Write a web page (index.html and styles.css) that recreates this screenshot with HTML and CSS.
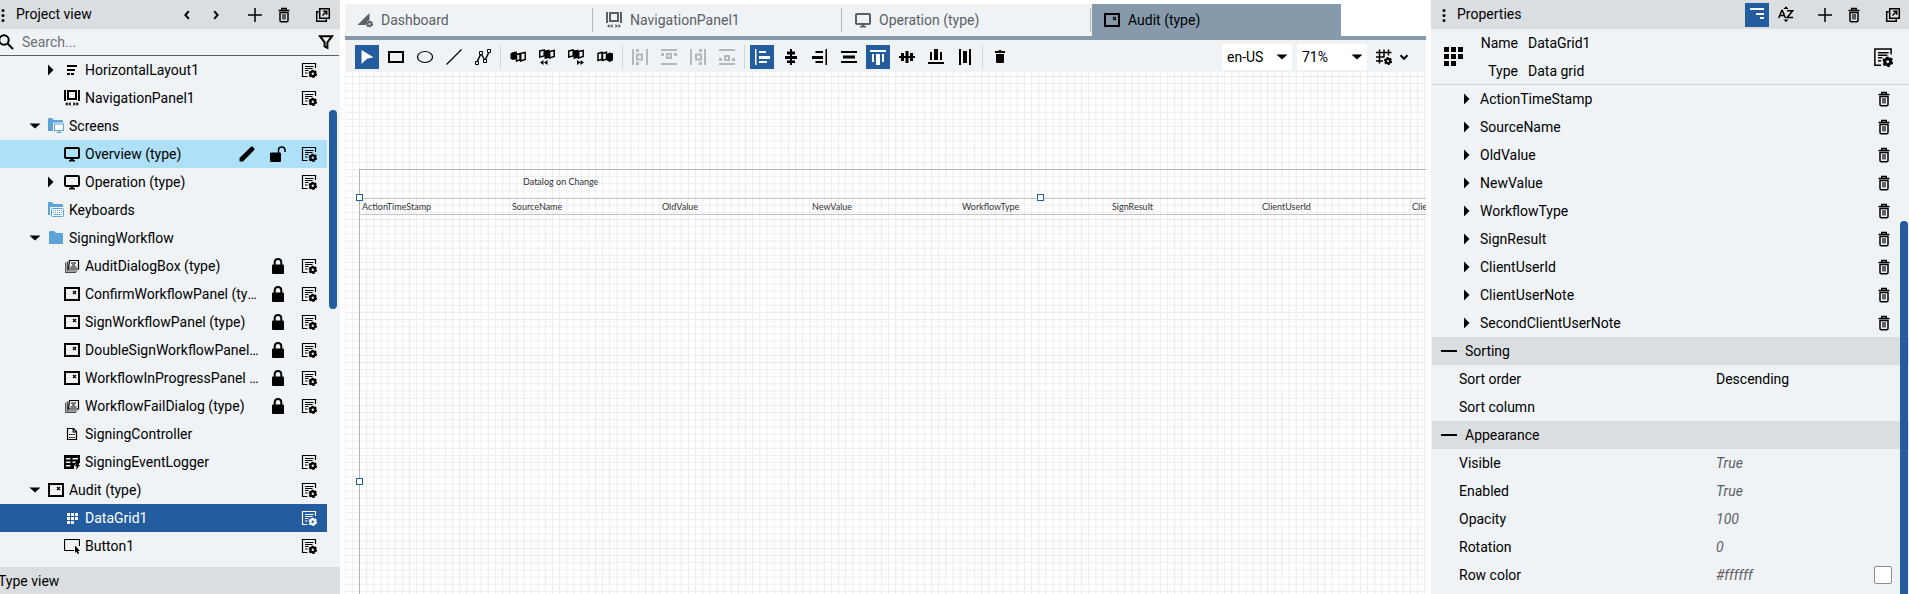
FILE: index.html
```html
<!DOCTYPE html>
<html lang="en">
<head>
<meta charset="utf-8">
<title>Project editor</title>
<link rel="stylesheet" href="styles.css">
</head>
<body>
<svg class="sprite" aria-hidden="true">
  <symbol id="dots" viewBox="0 0 16 16"><circle cx="8" cy="3.500" r="1.500"/><circle cx="8" cy="8.500" r="1.500"/><circle cx="8" cy="13.500" r="1.500"/></symbol>
  <symbol id="prev" viewBox="0 0 16 16"><path d="M9.800 4.200 6.400 8l3.400 3.800" class="ln2"/></symbol>
  <symbol id="next" viewBox="0 0 16 16"><path d="M6.200 4.200 9.600 8l-3.400 3.800" class="ln2"/></symbol>
  <symbol id="down" viewBox="0 0 16 16"><path d="M4.500 6.200 8 9.800l3.500-3.600" class="ln2"/></symbol>
  <symbol id="plus" viewBox="0 0 16 16"><path d="M8 1v14M1 8h14" class="ln15"/></symbol>
  <symbol id="trash" viewBox="0 0 16 16"><path d="M2.500 3.500h11M5.800 3.200V1.500h4.400v1.700M4 5.500v8q0 1.200 1.200 1.200h5.600q1.200 0 1.200-1.200v-8z" class="ln15"/><path d="M7 7v5.500M9 7v5.500" class="ln1"/></symbol>
  <symbol id="popout" viewBox="0 0 16 16"><path d="M4.700 1.700h9.600v9.600H4.700zM3.800 4.700H1.700v9.600h9.600v-2" class="ln15"/><path d="M7.500 8.500l4-4M8.300 4.300h3.400v3.400" class="ln15"/></symbol>
  <symbol id="search" viewBox="0 0 16 16"><circle cx="6" cy="6" r="4.700" class="ln2"/><path d="M9.500 9.500l5.500 5.500" class="ln2"/></symbol>
  <symbol id="filter" viewBox="0 0 16 16"><path d="M2 2.200h12L9.400 8.300v5.600L6.600 12.500V8.300z" class="ln2"/></symbol>
  <symbol id="caret-r" viewBox="0 0 16 16"><path d="M5 2.500 10.500 8 5 13.500z"/></symbol>
  <symbol id="caret-d" viewBox="0 0 16 16"><path d="M2.500 5.500h11L8 10.500z"/></symbol>
  <symbol id="gear" viewBox="0 0 8 8"><circle cx="4" cy="4" r="2.200" fill="none" stroke="currentColor" stroke-width="2.200"/><circle cx="4" cy="4" r="3.400" fill="none" stroke="currentColor" stroke-width="1.400" stroke-dasharray="2 1.560"/></symbol>
  <symbol id="props" viewBox="0 0 16 16"><path d="M6.500 14.500h-5v-13h13V6M4 4.500h8.500M4 6.500h7.500M4 8.500h3.500M4 11h2.500" class="ln1"/><use href="#gear" x="7.500" y="7.500" width="8.500" height="8.500"/></symbol>
  <symbol id="layout" viewBox="0 0 16 16"><path d="M3 3h10v2H3zM3 7h8v2H3zM3 11h3v2H3zM7 11h3v2H7z"/></symbol>
  <symbol id="nav" viewBox="0 0 16 16"><path d="M0 0h2v11H0zM14 0h2v11h-2z"/><path d="M4 1h8v8H4z" class="ln2"/><path d="M1 14l2.600-2v4zM4 14l2.600-2v4zM15 14l-2.600-2v4zM12 14l-2.600-2v4z"/></symbol>
  <symbol id="screen" viewBox="0 0 16 16"><rect x="1" y="2" width="14" height="10" rx="1" class="ln2"/><path d="M6.500 12h3v2h1.500v1.500H5V14h1.500z"/></symbol>
  <symbol id="folder" viewBox="0 0 16 16"><path d="M1 2q0-1 1-1h4l2 2h6q1 0 1 1v9q0 1-1 1H2q-1 0-1-1z" fill="#5ba4d9"/></symbol>
  <symbol id="folder-screen" viewBox="0 0 16 16"><path d="M0 1q0-1 1-1h3l1.500 2H14q1 0 1 1v10H0z" fill="#5ba4d9"/><path d="M5 4.500h11V16H5z" fill="#eff3f6"/><rect x="6.500" y="6" width="9" height="6.500" fill="#fff" stroke="#5ba4d9"/><path d="M8.500 14.500h5M11 13v2" stroke="#5ba4d9" stroke-width="1.200"/></symbol>
  <symbol id="folder-keys" viewBox="0 0 16 16"><path d="M0 1q0-1 1-1h3l1.500 2H14q1 0 1 1v10H0z" fill="#5ba4d9"/><rect x="2" y="5" width="14" height="11" fill="#eff3f6"/><rect x="3.500" y="6.500" width="12" height="8" rx="1" fill="#fff" stroke="#5ba4d9"/><path d="M5 8.500h9M5 10.500h9" stroke="#5ba4d9" stroke-dasharray="1 1"/><path d="M6 12.500h7" stroke="#5ba4d9"/></symbol>
  <symbol id="dialog" viewBox="0 0 16 16"><path d="M5.500 2.500h9v8.500h-10z" class="ln1"/><path d="M3.500 3.500v9.500h10M1.700 4.500v10H12" class="ln1" opacity=".7"/><path d="M7 5h5M8 7h3M6.500 9h6" class="ln1"/></symbol>
  <symbol id="panel" viewBox="0 0 16 16"><path d="M1 2h14v12H1z" class="ln2"/><path d="M9 5l3 3M12 5L9 8" class="ln1"/></symbol>
  <symbol id="script" viewBox="0 0 16 16"><path d="M3.500 2.500h6l3 3v8h-9zM9.200 2.500v3.500h3.500" class="ln1"/><path d="M5 8.500h6M5 11.500h6" class="ln1" stroke-dasharray="1.500 .700"/></symbol>
  <symbol id="logger" viewBox="0 0 16 16"><path fill-rule="evenodd" d="M0 1h16v8h-3.500L10 12v3H0zM2 4v1.500h4.500V4zM8.500 4v1.500H14V4zM2 7.500V9h4.500V7.500zM8.500 7.500V9H11l1-1.500zM2 11v1.500h4.500V11z"/><path d="M12.500 8.500h3l-1 2.500H16l-4 5 .800-3.500H11z"/></symbol>
  <symbol id="grid" viewBox="0 0 16 16"><path d="M3 3h3v3H3zM7 3h3v3H7zM11 3h3v3h-3zM3 7h3v3H3zM7 7h3v3H7zM11 7h3v3h-3zM3 11h3v3H3zM7 11h3v3H7z"/></symbol>
  <symbol id="grid-big" viewBox="0 0 19 19"><path d="M0 0h5v5H0zM7 0h5v5H7zM14 0h5v5h-5zM0 7h5v5H0zM7 7h5v5H7zM14 7h5v5h-5zM0 14h5v5H0zM7 14h5v5H7z"/></symbol>
  <symbol id="button" viewBox="0 0 16 16"><path d="M10 12.500H.500V1.500h15V8" class="ln1"/><path d="M11 7.500l5 5.500h-2l1.200 2.500-1.500.500-1.200-2.500L11 15z"/></symbol>
  <symbol id="pencil" viewBox="0 0 16 16"><path d="M.500 15.500V12L12 .800q.800-.800 1.700 0l1.500 1.500q.800.900 0 1.700L4 15.500z"/></symbol>
  <symbol id="unlock" viewBox="0 0 16 16"><rect x="0" y="6.500" width="11" height="9.500" rx="1"/><path d="M8.500 7V4q0-3 3.200-3T15 4v2" class="ln15"/></symbol>
  <symbol id="lock" viewBox="0 0 16 16"><rect x="2" y="6.500" width="12" height="9.500" rx="1"/><path d="M4.700 7V4.600q0-3.600 3.300-3.600t3.300 3.600V7" class="ln2"/></symbol>
  <symbol id="dash" viewBox="0 0 16 16"><path d="M12.500 1v7.500Q9.500 8.500 9 13H.500z"/><use href="#gear" x="9" y="8.500" width="7" height="7"/></symbol>
  <symbol id="pointer" viewBox="0 0 16 16"><path d="M2.500 1l12 7.200-6.500 1.500L2.500 15z"/></symbol>
  <symbol id="rect" viewBox="0 0 16 16"><path d="M1 3h14v10H1z" class="ln2"/></symbol>
  <symbol id="ellipse" viewBox="0 0 16 16"><ellipse cx="8" cy="8" rx="7.500" ry="5.500" class="ln1"/></symbol>
  <symbol id="line" viewBox="0 0 16 16"><path d="M.500 15.500L15.500.500" class="ln1"/></symbol>
  <symbol id="poly" viewBox="0 0 16 16"><path d="M2 13L6 4.500l4 7L14 3" class="ln15"/><path d="M.500 12.500h3v3h-3zM4.500 2.500h3v3h-3zM8.500 10.500h3v3h-3zM12.500.500h3v3h-3z" fill="#eff3f6" stroke="currentColor"/></symbol>
  <symbol id="front" viewBox="0 0 16 16"><path d="M.500 4.500l2.500-1.500 4-.500v7.500l-4 1-2.500-1z"/><path d="M6.500 5.500l3.500-1v6.500l-3.500 1zM10.700 4.500l4.500-1v7l-4.500 1.500z" class="ln15"/></symbol>
  <symbol id="forward" viewBox="0 0 16 16"><path d="M.700 2l4.500-1v6l-4.500 1zM10.700 2.500l4.500-1v6l-4.500 1.500z" class="ln15"/><path d="M5.500 1.500l5-1v8.500l-5 1zM1 13.500l3.500-2.500v5zM5 13.500l3.500-2.500v5z"/></symbol>
  <symbol id="backward" viewBox="0 0 16 16"><path d="M.700 2l4.500-1v6l-4.500 1zM10.700 2.500l4.500-1v6l-4.500 1.500z" class="ln15"/><path d="M5.500 1.500l5-1v8.500l-5 1zM12.500 13.500L9 11v5zM16 13.500L12.500 11v5z"/></symbol>
  <symbol id="back" viewBox="0 0 16 16"><path d="M1 4.500l4-1.200v7l-4 1.200zM5.500 4.500l4-1.200v7l-4 1.200z" class="ln15"/><path d="M10 5l3-1.500 3 1v7l-3.500 1.500-2.500-1.500z"/></symbol>
  <symbol id="dist-l" viewBox="0 0 16 16"><path d="M0 0h2v16H0zM14 0h2v16h-2zM4 0h3v3H4zM4 13h3v3H4z"/><path d="M5 5.500h5v5H5z" class="ln2"/></symbol>
  <symbol id="dist-t" viewBox="0 0 16 16"><path d="M0 0h16v2H0zM0 14h16v2H0zM0 4h3v3H0zM13 4h3v3h-3z"/><path d="M6 5h4v4H6z" class="ln2"/></symbol>
  <symbol id="dist-r" viewBox="0 0 16 16"><path d="M0 0h2v16H0zM14 0h2v16h-2zM9 0h3v3H9zM9 13h3v3H9z"/><path d="M6 5.500h5v5H6z" class="ln2"/></symbol>
  <symbol id="dist-b" viewBox="0 0 16 16"><path d="M0 0h16v2H0zM0 14h16v2H0zM0 9h3v3H0zM13 9h3v3h-3z"/><path d="M6 7h4v4H6z" class="ln2"/></symbol>
  <symbol id="al-l" viewBox="0 0 16 16"><path d="M1 0h1.500v16H1zM5 2h7v2H5zM5 7h11v3H5zM5 12h8v2H5z"/></symbol>
  <symbol id="al-c" viewBox="0 0 16 16"><path d="M7 0h2v16H7zM4 2.500h8v3H4zM2 7h12v3H2zM4 11.500h8v2.500H4z"/></symbol>
  <symbol id="al-r" viewBox="0 0 16 16"><path d="M13.500 0H15v16h-1.500zM3.500 2H11v2H3.500zM0 7h11v3H0zM3.500 12H11v2H3.500z"/></symbol>
  <symbol id="al-w" viewBox="0 0 16 16"><path d="M0 2h16v2H0zM2 6.500h12v3H2zM0 12h16v2H0z"/></symbol>
  <symbol id="al-t" viewBox="0 0 16 16"><path d="M0 1h16v2H0zM2 5h2v8H2zM6 5h4v11H6zM12 5h2v8h-2z"/></symbol>
  <symbol id="al-m" viewBox="0 0 16 16"><path d="M0 7h16v2H0zM2 4h3v8H2zM6.500 2h3v12h-3zM11 4h3v8h-3z"/></symbol>
  <symbol id="al-b" viewBox="0 0 16 16"><path d="M0 13h16v2H0zM2 3h2v8H2zM6 0h4v11H6zM12 3h2v8h-2z"/></symbol>
  <symbol id="al-h" viewBox="0 0 16 16"><path d="M2 0h2v16H2zM12 0h2v16h-2zM6 2h4v12H6z"/></symbol>
  <symbol id="bin" viewBox="0 0 16 16"><path d="M3 2h3.500L7 1h2l.500 1H13v2H3zM4 5h8v8q0 1-1 1H5q-1 0-1-1z"/></symbol>
  <symbol id="gridset" viewBox="0 0 16 16"><path d="M3.500.500v14M8 .500v8M12.500.500v6M0 3.500h15.500M0 8h8M0 12h7" class="ln15"/><use href="#gear" x="8" y="8" width="8" height="8"/></symbol>
  <symbol id="category" viewBox="0 0 16 16"><path d="M1 1h14v2H1zM7 6h8v2H7zM11 10h4v2h-4z"/></symbol>
  <symbol id="az" viewBox="0 0 16 16"><path d="M.700 12L3.800 4.500h.600L7.500 12M1.800 9.500h4.600M9 4.800h5.600L9.200 11.500h5.900" class="ln15"/><path d="M5.500 3L8 .300 10.500 3zM5.500 13.500L8 16l2.500-2.500z"/></symbol>
</svg>

<div class="app">
  <aside class="panel project">
    <header class="panel-head">
      <svg class="grip grip-edge"><use href="#dots"/></svg>
      <h2>Project view</h2>
      <div class="group">
        <button class="tool" aria-label="Previous"><svg><use href="#prev"/></svg></button>
        <button class="tool" aria-label="Next"><svg><use href="#next"/></svg></button>
      </div>
      <div class="group">
        <button class="tool" aria-label="Add"><svg><use href="#plus"/></svg></button>
        <button class="tool" aria-label="Delete"><svg><use href="#trash"/></svg></button>
      </div>
      <button class="tool" aria-label="Pop out"><svg><use href="#popout"/></svg></button>
    </header>
    <div class="search">
      <svg class="search-icon"><use href="#search"/></svg>
      <input type="text" placeholder="Search..." aria-label="Search">
      <button class="bare" aria-label="Filter"><svg><use href="#filter"/></svg></button>
    </div>
    <div class="tree-area">
      <ul class="tree">
        <li class="row deep"><svg class="caret"><use href="#caret-r"/></svg><svg><use href="#layout"/></svg><span class="label">HorizontalLayout1</span><button class="bare" aria-label="Settings"><svg><use href="#props"/></svg></button></li>
        <li class="row deep"><span class="caret"></span><svg><use href="#nav"/></svg><span class="label">NavigationPanel1</span><button class="bare" aria-label="Settings"><svg><use href="#props"/></svg></button></li>
        <li class="row"><svg class="caret"><use href="#caret-d"/></svg><svg><use href="#folder-screen"/></svg><span class="label">Screens</span></li>
        <li class="row deep hover"><span class="caret"></span><svg><use href="#screen"/></svg><span class="label">Overview (type)</span><button class="bare" aria-label="Edit"><svg><use href="#pencil"/></svg></button><button class="bare" aria-label="Lock"><svg><use href="#unlock"/></svg></button><button class="bare" aria-label="Settings"><svg><use href="#props"/></svg></button></li>
        <li class="row deep"><svg class="caret"><use href="#caret-r"/></svg><svg><use href="#screen"/></svg><span class="label">Operation (type)</span><button class="bare" aria-label="Settings"><svg><use href="#props"/></svg></button></li>
        <li class="row"><span class="caret"></span><svg><use href="#folder-keys"/></svg><span class="label">Keyboards</span></li>
        <li class="row"><svg class="caret"><use href="#caret-d"/></svg><svg><use href="#folder"/></svg><span class="label">SigningWorkflow</span></li>
        <li class="row deep"><span class="caret"></span><svg><use href="#dialog"/></svg><span class="label">AuditDialogBox (type)</span><button class="bare" aria-label="Unlock"><svg><use href="#lock"/></svg></button><button class="bare" aria-label="Settings"><svg><use href="#props"/></svg></button></li>
        <li class="row deep"><span class="caret"></span><svg><use href="#panel"/></svg><span class="label">ConfirmWorkflowPanel (type)</span><button class="bare" aria-label="Unlock"><svg><use href="#lock"/></svg></button><button class="bare" aria-label="Settings"><svg><use href="#props"/></svg></button></li>
        <li class="row deep"><span class="caret"></span><svg><use href="#panel"/></svg><span class="label">SignWorkflowPanel (type)</span><button class="bare" aria-label="Unlock"><svg><use href="#lock"/></svg></button><button class="bare" aria-label="Settings"><svg><use href="#props"/></svg></button></li>
        <li class="row deep"><span class="caret"></span><svg><use href="#panel"/></svg><span class="label">DoubleSignWorkflowPanel (type)</span><button class="bare" aria-label="Unlock"><svg><use href="#lock"/></svg></button><button class="bare" aria-label="Settings"><svg><use href="#props"/></svg></button></li>
        <li class="row deep"><span class="caret"></span><svg><use href="#panel"/></svg><span class="label">WorkflowInProgressPanel (type)</span><button class="bare" aria-label="Unlock"><svg><use href="#lock"/></svg></button><button class="bare" aria-label="Settings"><svg><use href="#props"/></svg></button></li>
        <li class="row deep"><span class="caret"></span><svg><use href="#dialog"/></svg><span class="label">WorkflowFailDialog (type)</span><button class="bare" aria-label="Unlock"><svg><use href="#lock"/></svg></button><button class="bare" aria-label="Settings"><svg><use href="#props"/></svg></button></li>
        <li class="row deep"><span class="caret"></span><svg><use href="#script"/></svg><span class="label">SigningController</span></li>
        <li class="row deep"><span class="caret"></span><svg><use href="#logger"/></svg><span class="label">SigningEventLogger</span><button class="bare" aria-label="Settings"><svg><use href="#props"/></svg></button></li>
        <li class="row"><svg class="caret"><use href="#caret-d"/></svg><svg><use href="#panel"/></svg><span class="label">Audit (type)</span><button class="bare" aria-label="Settings"><svg><use href="#props"/></svg></button></li>
        <li class="row deep selected"><span class="caret"></span><svg><use href="#grid"/></svg><span class="label">DataGrid1</span><button class="bare" aria-label="Settings"><svg><use href="#props"/></svg></button></li>
        <li class="row deep"><span class="caret"></span><svg><use href="#button"/></svg><span class="label">Button1</span><button class="bare" aria-label="Settings"><svg><use href="#props"/></svg></button></li>
      </ul>
      <div class="scroll-thumb tree-thumb"></div>
    </div>
    <footer class="type-view">Type view</footer>
  </aside>

  <main class="editor">
    <nav class="tabs">
      <button class="tab"><svg><use href="#dash"/></svg><span>Dashboard</span></button>
      <button class="tab"><svg><use href="#nav"/></svg><span>NavigationPanel1</span></button>
      <button class="tab"><svg><use href="#screen"/></svg><span>Operation (type)</span></button>
      <button class="tab active"><svg><use href="#panel"/></svg><span>Audit (type)</span></button>
    </nav>
    <div class="toolbar">
      <button class="tool on" aria-label="Select"><svg><use href="#pointer"/></svg></button>
      <button class="tool" aria-label="Rectangle"><svg><use href="#rect"/></svg></button>
      <button class="tool" aria-label="Ellipse"><svg><use href="#ellipse"/></svg></button>
      <button class="tool" aria-label="Line"><svg><use href="#line"/></svg></button>
      <button class="tool" aria-label="Polyline"><svg><use href="#poly"/></svg></button>
      <span class="sep"></span>
      <button class="tool" aria-label="Bring to front"><svg><use href="#front"/></svg></button>
      <button class="tool" aria-label="Bring forward"><svg><use href="#forward"/></svg></button>
      <button class="tool" aria-label="Send backward"><svg><use href="#backward"/></svg></button>
      <button class="tool" aria-label="Send to back"><svg><use href="#back"/></svg></button>
      <span class="sep"></span>
      <button class="tool" disabled aria-label="Distribute left"><svg><use href="#dist-l"/></svg></button>
      <button class="tool" disabled aria-label="Distribute top"><svg><use href="#dist-t"/></svg></button>
      <button class="tool" disabled aria-label="Distribute right"><svg><use href="#dist-r"/></svg></button>
      <button class="tool" disabled aria-label="Distribute bottom"><svg><use href="#dist-b"/></svg></button>
      <span class="sep"></span>
      <button class="tool on" aria-label="Align left"><svg><use href="#al-l"/></svg></button>
      <button class="tool" aria-label="Align center"><svg><use href="#al-c"/></svg></button>
      <button class="tool" aria-label="Align right"><svg><use href="#al-r"/></svg></button>
      <button class="tool" aria-label="Stretch width"><svg><use href="#al-w"/></svg></button>
      <button class="tool on" aria-label="Align top"><svg><use href="#al-t"/></svg></button>
      <button class="tool" aria-label="Align middle"><svg><use href="#al-m"/></svg></button>
      <button class="tool" aria-label="Align bottom"><svg><use href="#al-b"/></svg></button>
      <button class="tool" aria-label="Stretch height"><svg><use href="#al-h"/></svg></button>
      <span class="sep"></span>
      <button class="tool" aria-label="Delete"><svg><use href="#bin"/></svg></button>
      <div class="view-options">
        <span class="select"><select aria-label="Language"><option>en-US</option></select><svg class="arrow"><use href="#caret-d"/></svg></span>
        <span class="select"><select aria-label="Zoom"><option>71%</option></select><svg class="arrow"><use href="#caret-d"/></svg></span>
        <button class="grid-menu" aria-label="Grid settings"><svg><use href="#gridset"/></svg><svg><use href="#down"/></svg></button>
      </div>
    </div>
    <div class="canvas">
      <svg class="canvas-grid" aria-hidden="true">
        <defs><pattern id="cells" width="10" height="10" patternUnits="userSpaceOnUse" patternTransform="translate(14 97) scale(.715)"><path d="M.700 0v10M0 .700h10" stroke="#ececee" stroke-width="1.400"/></pattern></defs>
        <rect width="100%" height="100%" fill="url(#cells)"/>
      </svg>
      <section class="frame">
        <h3>Datalog on Change</h3>
        <table>
          <tr><th>ActionTimeStamp</th><th>SourceName</th><th>OldValue</th><th>NewValue</th><th>WorkflowType</th><th>SignResult</th><th>ClientUserId</th><th>ClientUserNote</th><th>SecondClientUserNote</th></tr>
        </table>
        <span class="handle top-left"></span>
        <span class="handle top-mid"></span>
        <span class="handle mid-left"></span>
      </section>
    </div>
  </main>

  <aside class="panel properties">
    <header class="panel-head">
      <svg class="grip"><use href="#dots"/></svg>
      <h2>Properties</h2>
      <div class="group">
        <button class="tool on" aria-label="Group by category"><svg><use href="#category"/></svg></button>
        <button class="tool" aria-label="Sort A to Z"><svg><use href="#az"/></svg></button>
      </div>
      <div class="group">
        <button class="tool" aria-label="Add"><svg><use href="#plus"/></svg></button>
        <button class="tool" aria-label="Delete"><svg><use href="#trash"/></svg></button>
      </div>
      <button class="tool" aria-label="Pop out"><svg><use href="#popout"/></svg></button>
    </header>
    <div class="summary">
      <svg class="big"><use href="#grid-big"/></svg>
      <dl><dt>Name</dt><dd>DataGrid1</dd><dt>Type</dt><dd>Data grid</dd></dl>
      <button class="bare" aria-label="Settings"><svg class="large"><use href="#props"/></svg></button>
    </div>
    <div class="prop-area">
      <ul class="columns">
        <li><svg><use href="#caret-r"/></svg><span>ActionTimeStamp</span><button class="bare" aria-label="Delete"><svg><use href="#trash"/></svg></button></li>
        <li><svg><use href="#caret-r"/></svg><span>SourceName</span><button class="bare" aria-label="Delete"><svg><use href="#trash"/></svg></button></li>
        <li><svg><use href="#caret-r"/></svg><span>OldValue</span><button class="bare" aria-label="Delete"><svg><use href="#trash"/></svg></button></li>
        <li><svg><use href="#caret-r"/></svg><span>NewValue</span><button class="bare" aria-label="Delete"><svg><use href="#trash"/></svg></button></li>
        <li><svg><use href="#caret-r"/></svg><span>WorkflowType</span><button class="bare" aria-label="Delete"><svg><use href="#trash"/></svg></button></li>
        <li><svg><use href="#caret-r"/></svg><span>SignResult</span><button class="bare" aria-label="Delete"><svg><use href="#trash"/></svg></button></li>
        <li><svg><use href="#caret-r"/></svg><span>ClientUserId</span><button class="bare" aria-label="Delete"><svg><use href="#trash"/></svg></button></li>
        <li><svg><use href="#caret-r"/></svg><span>ClientUserNote</span><button class="bare" aria-label="Delete"><svg><use href="#trash"/></svg></button></li>
        <li><svg><use href="#caret-r"/></svg><span>SecondClientUserNote</span><button class="bare" aria-label="Delete"><svg><use href="#trash"/></svg></button></li>
      </ul>
      <h3 class="section"><span class="minus"></span>Sorting</h3>
      <div class="prop"><span>Sort order</span><span>Descending</span></div>
      <div class="prop"><span>Sort column</span><span></span></div>
      <h3 class="section"><span class="minus"></span>Appearance</h3>
      <div class="prop"><span>Visible</span><i>True</i></div>
      <div class="prop"><span>Enabled</span><i>True</i></div>
      <div class="prop"><span>Opacity</span><i>100</i></div>
      <div class="prop"><span>Rotation</span><i>0</i></div>
      <div class="prop"><span>Row color</span><i>#ffffff</i><button class="swatch" aria-label="Pick row color"></button></div>
      <div class="scroll-thumb prop-thumb"></div>
    </div>
  </aside>
</div>
</body>
</html>
```
FILE: styles.css
```css
* { box-sizing: border-box; }

body {
  margin: 0;
  background: #fff;
  color: #000;
  font-family: Roboto, "Liberation Sans", sans-serif;
  font-size: 14px;
  line-height: 20px;
}

h2, h3, ul, dl, dd { margin: 0; padding: 0; font-size: inherit; font-weight: 400; }
ul { list-style: none; }
button, input, select { font: inherit; color: inherit; }
button { padding: 0; border: 0; background: none; }

svg { display: block; flex: none; width: 16px; height: 16px; fill: currentColor; }
.sprite { position: absolute; width: 0; height: 0; }
.ln1, .ln15, .ln2 { fill: none; stroke: currentColor; }
.ln1 { stroke-width: 1.2px; }
.ln15 { stroke-width: 1.5px; }
.ln2 { stroke-width: 2px; }

.app { display: flex; gap: 5px; height: 100vh; overflow: hidden; }

.panel { display: flex; flex: none; flex-direction: column; background: #eff3f6; }
.project { width: 340px; }
.properties { width: 478px; }

.panel-head {
  display: flex;
  flex: none;
  align-items: center;
  gap: 15px;
  height: 29px;
  padding-right: 4px;
  background: #dadee1;
}
.project .panel-head { padding-right: 5px; }
.panel-head h2 { flex: 1; padding-bottom: 2px; }
.panel-head .tool { height: 23px; }
.panel-head .tool.on { height: 24px; }
.group { display: flex; gap: 5px; }
.grip { margin: 0 -10px 0 5px; }
.grip-edge { margin: 0 -10px 0 -5px; }

.tool { display: grid; flex: none; place-items: center; width: 24px; height: 24px; }
.tool.on { background: #235c9f; color: #fff; }
.tool:disabled { color: #b4b8bc; }
.bare { flex: none; }

.search {
  display: flex;
  flex: none;
  align-items: center;
  gap: 8px;
  height: 27px;
  margin-right: 1px;
  padding-right: 5px;
  border-bottom: 1px solid #5c6064;
}
.search-icon { margin-left: -2px; }
.search input { flex: 1; min-width: 0; padding: 0; border: 0; outline: 0; background: none; }
.search input::placeholder { color: #6d7073; opacity: 1; }

.tree-area, .prop-area { position: relative; flex: 1; min-height: 0; }
.tree { width: 327px; }
.row { display: flex; align-items: center; gap: 15px; height: 28px; padding: 0 10px 0 27px; }
.row.deep { padding-left: 43px; }
.row .caret { width: 16px; margin-right: -10px; }
.row .caret + svg { margin-right: -10px; }
.row .label {
  flex: 1;
  min-width: 0;
  margin-right: -4px;
  overflow: hidden;
  text-overflow: ellipsis;
  white-space: nowrap;
}
.row.hover { background: #aee0f7; }
.row.selected { background: #235c9f; color: #fff; }

.scroll-thumb { position: absolute; width: 8px; border-radius: 4px; background: #235c9f; }
.tree-thumb { top: 54px; right: 3px; height: 199px; }
.prop-thumb { top: 136px; right: 1px; bottom: 0; border-radius: 4px 4px 0 0; }

.type-view { flex: none; height: 27px; padding-top: 4px; background: #dadee1; text-indent: -2px; }

.editor { display: flex; flex: 1; flex-direction: column; min-width: 0; }
.tabs { display: flex; flex: none; padding-top: 4px; border-bottom: 4px solid #869aab; }
.tab {
  display: flex;
  align-items: center;
  width: 249px;
  height: 32px;
  padding: 4px 1px 4px 12px;
  background: #eff3f6;
  color: #5c6064;
}
.tab span { flex: 1; padding-left: 8px; border-right: 1px solid #b4b8bc; line-height: 24px; text-align: left; }
.tab.active { background: #869aab; color: #000; }
.tab.active span { border-color: transparent; }

.toolbar { display: flex; flex: none; gap: 5px; height: 32px; padding: 5px 10px 3px; background: #eff3f6; }
.sep { width: 1px; background: #d0d4d8; }
.view-options { display: flex; align-items: center; gap: 5px; margin-left: auto; }
.select { display: grid; align-items: center; width: 70px; }
.select select {
  grid-area: 1 / 1;
  width: 100%;
  height: 26px;
  padding: 0 5px;
  border: 0;
  background: #fff;
  appearance: none;
}
.arrow { grid-area: 1 / 1; justify-self: end; margin-right: 2px; pointer-events: none; }
.grid-menu { display: flex; gap: 4px; padding: 0 4px; }

.canvas { position: relative; flex: 1; min-height: 0; overflow: hidden; }
.canvas-grid { position: absolute; inset: 0; width: 100%; height: 100%; }
.frame {
  position: relative;
  height: 100%;
  margin: 97px 0 0 14px;
  border: solid #b4b4b6;
  border-width: 1px 0 0 1px;
  color: #333;
  font-family: Lato, sans-serif;
  font-size: 9px;
}
.frame h3 { padding: 2px 0 6px 163px; }
.frame table { width: 1350px; border-collapse: collapse; table-layout: fixed; }
.frame tr { border: solid #c4c4c6; border-width: 1px 0; }
.frame th { height: 16px; padding: 0 2px; font-weight: 400; line-height: 14px; text-align: left; }
.handle { position: absolute; width: 7px; height: 7px; border: 1px solid #235c9f; background: #fff; }
.top-left { top: 24px; left: -4px; }
.top-mid { top: 24px; left: 677px; }
.mid-left { top: 308px; left: -4px; }

.summary {
  display: flex;
  flex: none;
  align-items: center;
  height: 56px;
  margin-left: 1px;
  padding: 0 16px 0 12px;
  border-bottom: 1px solid #d0d4d8;
}
.summary .big { width: 19px; height: 19px; }
.summary .large { width: 20px; height: 20px; }
.summary dl {
  display: grid;
  flex: 1;
  grid-template-columns: 55px 1fr;
  column-gap: 10px;
  line-height: 28px;
}
.summary dt { text-align: right; }

.columns li { display: flex; align-items: center; height: 28px; padding: 0 17px 0 28px; }
.columns span { flex: 1; padding-left: 5px; }
.section { display: flex; align-items: center; gap: 8px; height: 28px; margin-left: 1px; padding: 0 0 1px 9px; background: #dadee1; }
.minus { width: 16px; height: 2px; background: #000; }
.prop { display: grid; grid-template-columns: 257px 1fr 18px; align-items: center; height: 28px; padding: 0 17px 0 28px; }
.prop i { color: #5c6064; }
.swatch { width: 18px; height: 18px; border: 1px solid #8a8d90; border-radius: 2px; background: #fff; }
```
